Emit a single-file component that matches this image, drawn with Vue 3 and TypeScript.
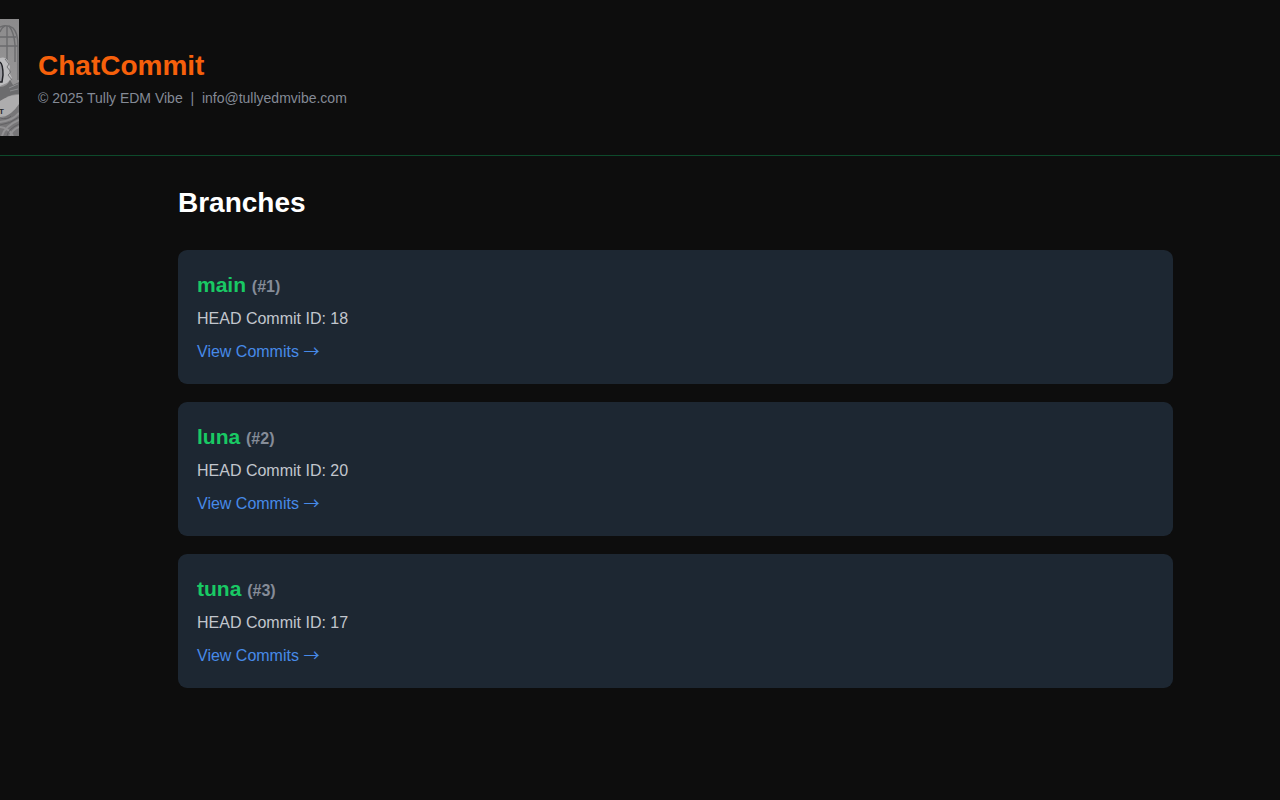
<script setup lang="ts">
interface Branch {
  id: number
  name: string
  head: number
}

const branches: Branch[] = [
  { id: 1, name: 'main', head: 18 },
  { id: 2, name: 'luna', head: 20 },
  { id: 3, name: 'tuna', head: 17 },
]
</script>

<template>
  <div class="page">
    <header class="header">
      <svg class="logo" viewBox="0 0 19 117" aria-hidden="true">
        <defs>
          <linearGradient id="wall" x1="0" y1="0" x2="0" y2="1">
            <stop offset="0" stop-color="#8c8b8c" />
            <stop offset="0.5" stop-color="#969596" />
            <stop offset="1" stop-color="#858485" />
          </linearGradient>
        </defs>
        <rect width="19" height="117" fill="url(#wall)" />
        <g fill="none" stroke="#6b6b6d" stroke-width="1.4">
          <path d="M0 8Q7 5 13 9Q18 14 18 27V61" />
          <path d="M7 7V42M0 13Q2 8 5 7M9 7Q14 13 15 26V43" />
          <path d="M0 18H16M0 27H18" />
        </g>
        <path d="M0 39Q5 37 8 42L10 48L9 53L12 59L7 64L0 67Z" fill="#bcbcbe" />
        <path d="M0 43Q3 45 3 56L2 63H0" fill="#9a9aa0" stroke="#202126" stroke-width="1.5" />
        <path d="M5 40L9 45L7 48L11 53L8 56L12 61" fill="none" stroke="#77777a" stroke-width="1" />
        <path d="M0 68Q7 68 10 61L13 66L19 63V75Q11 75 6 79L0 82Z" fill="#6c6c6e" />
        <path d="M9 69L18 65M10 72L18 70" stroke="#8e8e90" stroke-width="1" />
        <path d="M0 82Q10 75 19 76V87Q12 97 0 98Z" fill="#aeadae" />
        <path d="M19 85Q12 96 0 100V117H19Z" fill="#777678" />
        <path d="M0 103Q12 102 19 94M2 117Q5 107 19 101M10 117Q12 111 19 108M0 108Q9 109 13 117" fill="none" stroke="#929193" stroke-width="2" />
        <path d="M0 99Q8 101 11 97M0 106Q10 105 19 98M7 117Q8 110 19 105" fill="none" stroke="#626164" stroke-width="1" />
        <text x="-1" y="95" class="logo-letter">T</text>
      </svg>
      <div>
        <h1 class="brand">ChatCommit</h1>
        <p class="legal">© 2025 Tully EDM Vibe &nbsp;|&nbsp; info@tullyedmvibe.com</p>
      </div>
    </header>

    <main class="content">
      <h2 class="title">Branches</h2>
      <ul class="list">
        <li v-for="branch in branches" :key="branch.id" class="card">
          <h3 class="name">{{ branch.name }} <span class="number">(#{{ branch.id }})</span></h3>
          <p class="head">HEAD Commit ID: {{ branch.head }}</p>
          <a class="link" href="#">View Commits <span class="arrow">→</span></a>
        </li>
      </ul>
    </main>
  </div>
</template>

<style>
body {
  background: #0d0d0d;
}
</style>

<style scoped>
.page {
  color: #fff;
  font-family: "Liberation Sans", Arial, sans-serif;
  font-size: 16px;
  line-height: 28px;
}

h1,
h2,
h3,
p,
ul {
  margin: 0;
  padding: 0;
}

.header {
  display: flex;
  align-items: center;
  gap: 19px;
  padding: 19px 19px 19px 0;
  border-bottom: 1px solid #0d4a2b;
}

.logo {
  width: 19px;
  height: 117px;
  flex: none;
}

.logo-letter {
  fill: #29292b;
  font: bold 8px "Liberation Sans", Arial, sans-serif;
}

.brand {
  color: #f6600b;
  font-size: 28px;
  line-height: 40px;
}

.legal {
  color: #848a96;
  font-size: 14px;
  line-height: 24px;
}

.content {
  padding: 28px 107px 28px 178px;
}

.title {
  margin-bottom: 28px;
  font-size: 28px;
  line-height: 38px;
}

.list {
  display: grid;
  gap: 18px;
  list-style: none;
}

.card {
  padding: 19px 19px 18px;
  border-radius: 9px;
  background: #1d2732;
}

.name {
  margin-bottom: 2px;
  color: #19c964;
  font-size: 21px;
  line-height: 32px;
}

.number {
  color: #858c98;
  font-size: 16px;
}

.head {
  margin-bottom: 5px;
  color: #c2c6cd;
}

.link {
  display: block;
  width: fit-content;
  color: #478ae8;
  text-decoration: none;
}

.link:hover {
  text-decoration: underline;
}

.arrow {
  font-family: "Noto Sans CJK JP", sans-serif;
  line-height: 1;
}
</style>
